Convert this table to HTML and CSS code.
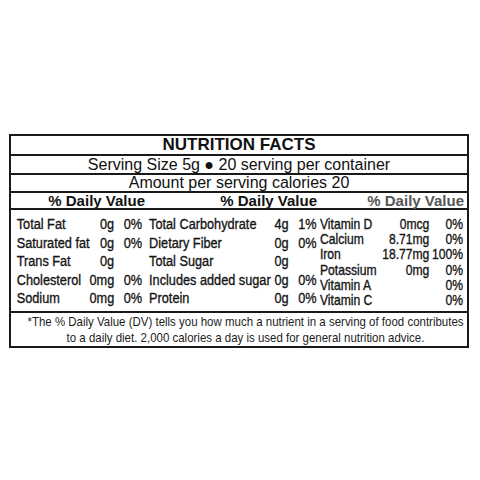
FILE: index.html
```html
<!DOCTYPE html>
<html lang="en">
<head>
  <meta charset="UTF-8">
  <meta name="viewport" content="width=device-width, initial-scale=1.0">
  <title>Nutrition Facts</title>
  <link rel="stylesheet" href="styles.css">
</head>
<body>
<div class="label">
  <div class="title">NUTRITION FACTS</div>
  <div class="line">Serving Size 5g &#9679; 20 serving per container</div>
  <div class="line amount">Amount per serving calories 20</div>

  <div class="dv-head">
    <p>% Daily Value</p>
    <p>% Daily Value</p>
    <p class="faded">% Daily Value</p>
  </div>

  <div class="facts">
    <div class="facts-grid">
      <div class="col col-1">
        <span>Total Fat</span><span class="qty">0g</span><span class="pct">0%</span>
        <span>Saturated fat</span><span class="qty">0g</span><span class="pct">0%</span>
        <span>Trans Fat</span><span class="qty">0g</span><span class="pct"></span>
        <span>Cholesterol</span><span class="qty">0mg</span><span class="pct">0%</span>
        <span>Sodium</span><span class="qty">0mg</span><span class="pct">0%</span>
      </div>
      <div class="col col-2">
        <span>Total Carbohydrate</span><span class="qty">4g</span><span class="pct">1%</span>
        <span>Dietary Fiber</span><span class="qty">0g</span><span class="pct">0%</span>
        <span>Total Sugar</span><span class="qty">0g</span><span class="pct"></span>
        <span>Includes added sugar</span><span class="qty">0g</span><span class="pct">0%</span>
        <span>Protein</span><span class="qty">0g</span><span class="pct">0%</span>
      </div>
      <div class="col col-3">
        <span>Vitamin D</span><span class="qty">0mcg</span><span class="pct">0%</span>
        <span>Calcium</span><span class="qty">8.71mg</span><span class="pct">0%</span>
        <span>Iron</span><span class="qty">18.77mg</span><span class="pct">100%</span>
        <span>Potassium</span><span class="qty">0mg</span><span class="pct">0%</span>
        <span>Vitamin A</span><span class="qty"></span><span class="pct">0%</span>
        <span>Vitamin C</span><span class="qty"></span><span class="pct">0%</span>
      </div>
    </div>
  </div>

  <div class="note">
    <p>*The % Daily Value (DV) tells you how much a nutrient in a serving of food contributes</p>
    <p>to a daily diet. 2,000 calories a day is used for general nutrition advice.</p>
  </div>
</div>
</body>
</html>
```

FILE: styles.css
```css
* {
    margin: 0;
    padding: 0;
    box-sizing: border-box;
}

body {
    background-color: #fff;
    color: #111;
    font-family: "Liberation Sans", Arial, sans-serif;
}

.label {
    width: 460px;
    margin: 134px 0 0 9px;
    border: 2px solid #1a1a1a;
}

.title {
    font-size: 17px;
    font-weight: bold;
    text-align: center;
    line-height: 18px;
    border-bottom: 2px solid #1a1a1a;
}

.line {
    font-size: 16px;
    text-align: center;
    line-height: 17px;
    border-bottom: 2px solid #1a1a1a;
}

.amount {
    line-height: 16px;
}

.dv-head {
    display: grid;
    grid-template-columns: 134px 172px 1fr;
    font-size: 15px;
    font-weight: bold;
    line-height: 15px;
    text-align: right;
    border-bottom: 2px solid #1a1a1a;
}

.dv-head .faded {
    color: #555;
    padding-right: 3px;
}

/* the label uses a narrow face: squeeze Arial metrics horizontally */
.facts {
    height: 103px;
    overflow: hidden;
    border-bottom: 2px solid #1a1a1a;
}

.facts-grid {
    display: grid;
    grid-template-columns: 163.4px 204.9px 1fr;
    width: 556px;
    transform: scaleX(0.82);
    transform-origin: left top;
    font-size: 15.5px;
    color: #141414;
    -webkit-text-stroke: 0.35px #141414;
}

.col {
    display: grid;
    align-content: start;
    white-space: nowrap;
}

.qty, .pct {
    text-align: right;
}

.col-1 {
    grid-template-columns: 1fr 30px 34px;
    grid-auto-rows: 18.5px;
    line-height: 18.5px;
    padding: 5px 5px 0 7px;
}

.col-2 {
    grid-template-columns: 1fr 22px 34px;
    grid-auto-rows: 18.5px;
    line-height: 18.5px;
    padding: 5px 3.7px 0 5px;
}

.col-3 {
    grid-template-columns: 1fr 64px 41px;
    grid-auto-rows: 15.2px;
    font-size: 14.8px;
    line-height: 15.2px;
    padding: 7px 4.8px 0 8.5px;
}

.note {
    display: flex;
    flex-direction: column;
    align-items: center;
    font-size: 13.5px;
    line-height: 16px;
    height: 33px;
    padding: 1px 0 0 12px;
    color: #1c1c1c;
    overflow: hidden;
}

.note p {
    white-space: nowrap;
    transform: scaleX(0.85);
}
```
